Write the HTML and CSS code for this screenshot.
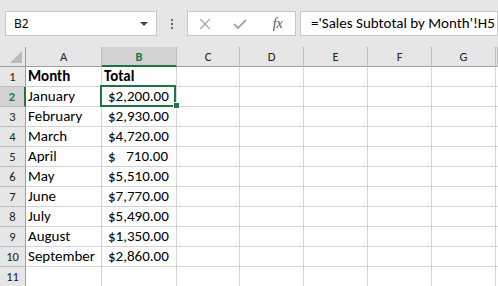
FILE: index.html
```html
<!DOCTYPE html>
<html lang="en">
<head>
    <meta charset="UTF-8">
    <title>Sales Subtotal by Month</title>
    <link rel="stylesheet" href="styles.css">
</head>
<body>
    <div class="toolbar">
        <div class="namebox">
            <span>B2</span>
            <span class="caret"></span>
        </div>
        <div class="grip"><i></i><i></i><i></i></div>
        <div class="fbuttons">
            <span class="fbtn">
                <svg width="12" height="12" viewBox="0 0 12 12"><path d="M1 1 L11 11 M11 1 L1 11" stroke="#a8a8a8" stroke-width="1.4" fill="none"/></svg>
            </span>
            <span class="fbtn">
                <svg width="14" height="10" viewBox="0 0 14 10"><path d="M1 5 L5 9 L13 1" stroke="#a8a8a8" stroke-width="2" fill="none"/></svg>
            </span>
            <span class="fbtn fx">fx</span>
        </div>
        <div class="formula">='Sales Subtotal by Month'!H5</div>
    </div>

    <div class="sheet">
        <div class="hd corner">
            <svg width="12" height="12" viewBox="0 0 12 12"><path d="M0 12 L12 12 L12 0 Z" fill="#b9b9b9"/></svg>
        </div>
        <div class="hd">A</div>
        <div class="hd sel">B</div>
        <div class="hd">C</div>
        <div class="hd">D</div>
        <div class="hd">E</div>
        <div class="hd">F</div>
        <div class="hd">G</div>
        <div class="hd"></div>

        <div class="rh">1</div>
        <div class="c bold">Month</div>
        <div class="c bold">Total</div>
        <div class="c"></div><div class="c"></div><div class="c"></div><div class="c"></div><div class="c"></div><div class="c"></div>

        <div class="rh sel">2</div>
        <div class="c">January</div>
        <div class="c money active"><span>$</span><span>2,200.00</span></div>
        <div class="c"></div><div class="c"></div><div class="c"></div><div class="c"></div><div class="c"></div><div class="c"></div>

        <div class="rh">3</div>
        <div class="c">February</div>
        <div class="c money"><span>$</span><span>2,930.00</span></div>
        <div class="c"></div><div class="c"></div><div class="c"></div><div class="c"></div><div class="c"></div><div class="c"></div>

        <div class="rh">4</div>
        <div class="c">March</div>
        <div class="c money"><span>$</span><span>4,720.00</span></div>
        <div class="c"></div><div class="c"></div><div class="c"></div><div class="c"></div><div class="c"></div><div class="c"></div>

        <div class="rh">5</div>
        <div class="c">April</div>
        <div class="c money"><span>$</span><span>710.00</span></div>
        <div class="c"></div><div class="c"></div><div class="c"></div><div class="c"></div><div class="c"></div><div class="c"></div>

        <div class="rh">6</div>
        <div class="c">May</div>
        <div class="c money"><span>$</span><span>5,510.00</span></div>
        <div class="c"></div><div class="c"></div><div class="c"></div><div class="c"></div><div class="c"></div><div class="c"></div>

        <div class="rh">7</div>
        <div class="c">June</div>
        <div class="c money"><span>$</span><span>7,770.00</span></div>
        <div class="c"></div><div class="c"></div><div class="c"></div><div class="c"></div><div class="c"></div><div class="c"></div>

        <div class="rh">8</div>
        <div class="c">July</div>
        <div class="c money"><span>$</span><span>5,490.00</span></div>
        <div class="c"></div><div class="c"></div><div class="c"></div><div class="c"></div><div class="c"></div><div class="c"></div>

        <div class="rh">9</div>
        <div class="c">August</div>
        <div class="c money"><span>$</span><span>1,350.00</span></div>
        <div class="c"></div><div class="c"></div><div class="c"></div><div class="c"></div><div class="c"></div><div class="c"></div>

        <div class="rh">10</div>
        <div class="c">September</div>
        <div class="c money"><span>$</span><span>2,860.00</span></div>
        <div class="c"></div><div class="c"></div><div class="c"></div><div class="c"></div><div class="c"></div><div class="c"></div>

        <div class="rh">11</div>
        <div class="c"></div><div class="c"></div>
        <div class="c"></div><div class="c"></div><div class="c"></div><div class="c"></div><div class="c"></div><div class="c"></div>
    </div>
</body>
</html>
```

FILE: styles.css
```css
body {
    margin: 0;
    width: 498px;
    height: 286px;
    overflow: hidden;
    background: #e6e6e6;
    font-family: Carlito, Lato, sans-serif;
    color: #000;
}
.toolbar {
    display: flex;
    align-items: flex-start;
    height: 47px;
    box-sizing: border-box;
    padding: 11px 0 0 5px;
    white-space: nowrap;
}
.namebox {
    display: flex;
    align-items: center;
    justify-content: space-between;
    width: 152px;
    height: 25px;
    box-sizing: border-box;
    padding: 0 8px 0 8px;
    background: white;
    border: 1px solid #c6c6c6;
    font-family: "Noto Sans", sans-serif;
    font-size: 12px;
}
.caret {
    width: 0;
    height: 0;
    border-left: 4px solid transparent;
    border-right: 4px solid transparent;
    border-top: 4px solid #444;
}
.grip {
    display: flex;
    flex-direction: column;
    align-items: center;
    gap: 2px;
    width: 30px;
    padding-top: 8px;
}
.grip i {
    display: block;
    width: 2px;
    height: 2px;
    background: #666;
}
.fbuttons {
    display: flex;
    width: 109px;
    height: 25px;
    box-sizing: border-box;
    background: white;
    border: 1px solid #c6c6c6;
}
.fbtn {
    display: flex;
    align-items: center;
    justify-content: center;
    width: 36px;
}
.fx {
    padding-left: 3px;
    font-family: "Liberation Serif", serif;
    font-style: italic;
    font-size: 14px;
    color: #555;
}
.formula {
    width: 198px;
    height: 25px;
    box-sizing: border-box;
    margin-left: 4px;
    padding-left: 10px;
    overflow: hidden;
    background: white;
    border: 1px solid #c6c6c6;
    font-size: 15px;
    line-height: 23px;
}
.sheet {
    display: grid;
    grid-template-columns: 26px 76px 75px 63px 64px 64px 64px 64px 2px;
    grid-auto-rows: 20px;
    background: white;
}
.hd {
    background: #e6e6e6;
    border-right: 1px solid #bcbcbc;
    border-bottom: 1px solid #9e9e9e;
    font-size: 12.5px;
    line-height: 19px;
    text-align: center;
    color: #222;
}
.hd.sel {
    background: #d2d2d2;
    color: #217346;
    font-weight: bold;
    border-bottom: 2px solid #217346;
}
.corner {
    display: flex;
    align-items: flex-end;
    justify-content: flex-end;
    padding: 0 3px 3px 0;
    box-sizing: border-box;
    border-right-color: #9e9e9e;
}
.rh {
    background: #e6e6e6;
    border-right: 1px solid #9e9e9e;
    border-bottom: 1px solid #bcbcbc;
    font-size: 12.5px;
    line-height: 19px;
    text-align: center;
    color: #222;
}
.rh.sel {
    background: #d2d2d2;
    color: #217346;
    font-weight: bold;
    border-right: 2px solid #217346;
}
.c {
    overflow: hidden;
    border-right: 1px solid #d4d4d4;
    border-bottom: 1px solid #d4d4d4;
    padding-left: 2px;
    font-size: 15px;
    line-height: 19px;
    white-space: nowrap;
}
.bold { font-weight: bold; }
.money {
    display: flex;
    justify-content: space-between;
    padding: 0 8px 0 6px;
}
.active {
    position: relative;
    overflow: visible;
}
.active::before {
    content: "";
    position: absolute;
    left: -2px;
    top: -2px;
    width: 76px;
    height: 22px;
    box-sizing: border-box;
    border: 2px solid #217346;
}
.active::after {
    content: "";
    position: absolute;
    left: 71px;
    top: 15px;
    width: 5px;
    height: 5px;
    background: #217346;
    border: 1px solid white;
}
```
